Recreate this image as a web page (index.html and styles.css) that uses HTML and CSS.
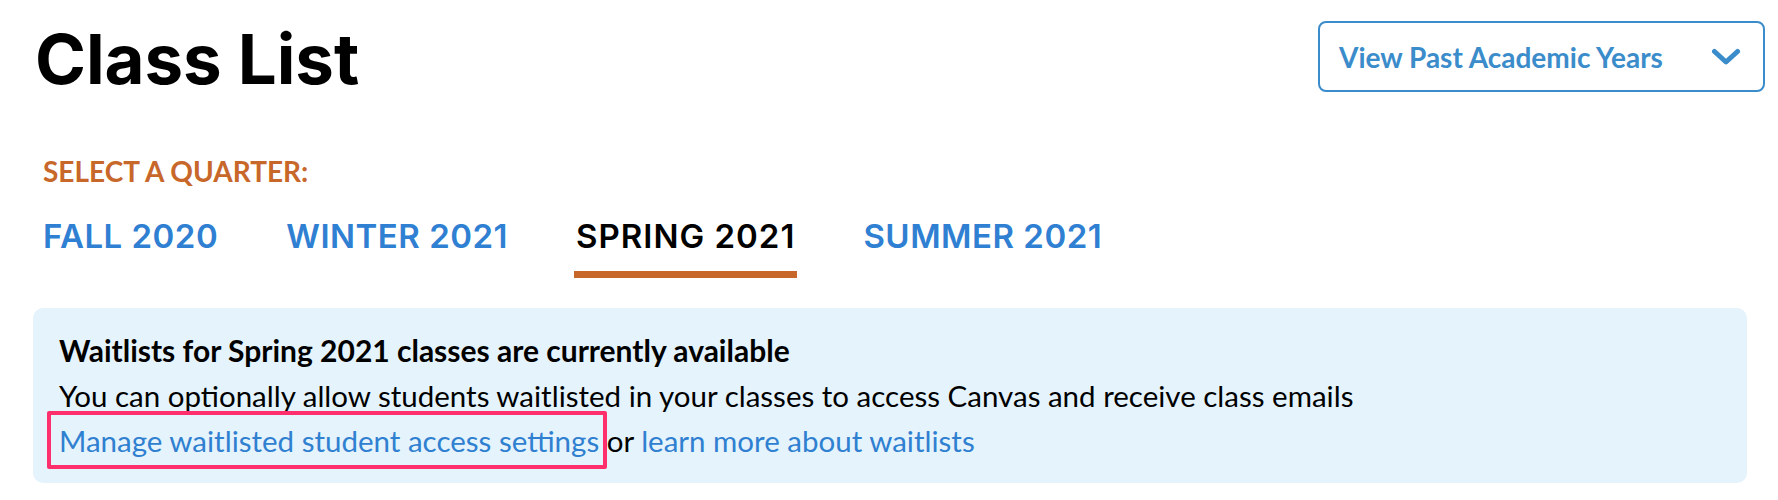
FILE: index.html
```html
<!DOCTYPE html>
<html lang="en">
<head>
<meta charset="utf-8">
<title>Class List</title>
<link rel="stylesheet" href="styles.css">
</head>
<body>
<main class="page">
  <header class="header">
    <h1 class="title">Class List</h1>
    <button class="years-btn" type="button">
      <span class="years-label">View Past Academic Years</span>
      <svg class="chevron" width="30" height="18" viewBox="0 0 30 18" aria-hidden="true">
        <polyline points="3.5,3.5 15,14 26.5,3.5" fill="none" stroke="currentColor" stroke-width="5" stroke-linecap="round" stroke-linejoin="round"/>
      </svg>
    </button>
  </header>

  <div class="quarter-label">SELECT A QUARTER:</div>
  <nav class="tabs">
    <a class="tab" href="#">FALL 2020</a>
    <a class="tab" href="#">WINTER 2021</a>
    <a class="tab active" href="#">SPRING 2021</a>
    <a class="tab" href="#">SUMMER 2021</a>
  </nav>

  <section class="notice">
    <p class="notice-title">Waitlists for Spring 2021 classes are currently available</p>
    <p class="notice-line">You can optionally allow students waitlisted in your classes to access Canvas and receive class emails</p>
    <p class="notice-line"><span class="highlight"><a class="link" href="#">Manage waitlisted student access settings</a></span> or <a class="link" href="#">learn more about waitlists</a></p>
  </section>
</main>
</body>
</html>
```
FILE: styles.css
```css
* { box-sizing: border-box; }

body {
  margin: 0;
  background: #ffffff;
  font-family: Lato, "Open Sans", sans-serif;
  color: #000;
}

.page {
  padding: 17px 31px 0 33px;
}

.header {
  display: flex;
  justify-content: space-between;
  align-items: flex-start;
}

.title {
  margin: 0 0 0 2px;
  font-family: Inter, Roboto, sans-serif;
  font-weight: 700;
  font-size: 69px;
  line-height: 84px;
  letter-spacing: -0.1px;
  color: #000;
}

.years-btn {
  margin: 4px -18px 0 0;
  width: 447px;
  height: 71px;
  display: flex;
  align-items: center;
  justify-content: space-between;
  padding: 0 22px 0 19px;
  border: 2px solid #3b8cca;
  border-radius: 8px;
  background: #fff;
  color: #3b8cca;
  font-family: Lato, sans-serif;
  font-weight: 700;
  font-size: 28px;
  line-height: 34px;
  cursor: pointer;
}

.chevron { display: block; }

.quarter-label {
  margin: 53px 0 0 10px;
  font-weight: 700;
  font-size: 28px;
  line-height: 34px;
  color: #c8672a;
}

.tabs {
  display: flex;
  gap: 64px;
  margin: 28px 0 0 8px;
}

.tab {
  display: block;
  padding: 0 2px 15px;
  border-bottom: 7px solid transparent;
  font-family: Inter, Roboto, sans-serif;
  font-weight: 600;
  font-size: 33px;
  line-height: 40px;
  letter-spacing: 0.5px;
  color: #2f80d2;
  text-decoration: none;
}

.tab.active {
  color: #000;
  border-bottom-color: #c8672a;
  letter-spacing: 1px;
}

.notice {
  margin-top: 30px;
  padding: 20px 26px;
  background: #e5f3fc;
  border-radius: 10px;
  font-size: 29.5px;
  line-height: 45px;
}

.notice p { margin: 0; }

.notice-title {
  font-weight: 700;
  font-size: 30px;
}

.link {
  color: #2f80d0;
  text-decoration: none;
}

.highlight {
  display: inline-block;
  position: relative;
}

.highlight::after {
  content: "";
  position: absolute;
  top: -7px;
  bottom: -6px;
  left: -12px;
  right: -8px;
  border: 4px solid #ff2f6e;
  border-radius: 2px;
  pointer-events: none;
}
```
